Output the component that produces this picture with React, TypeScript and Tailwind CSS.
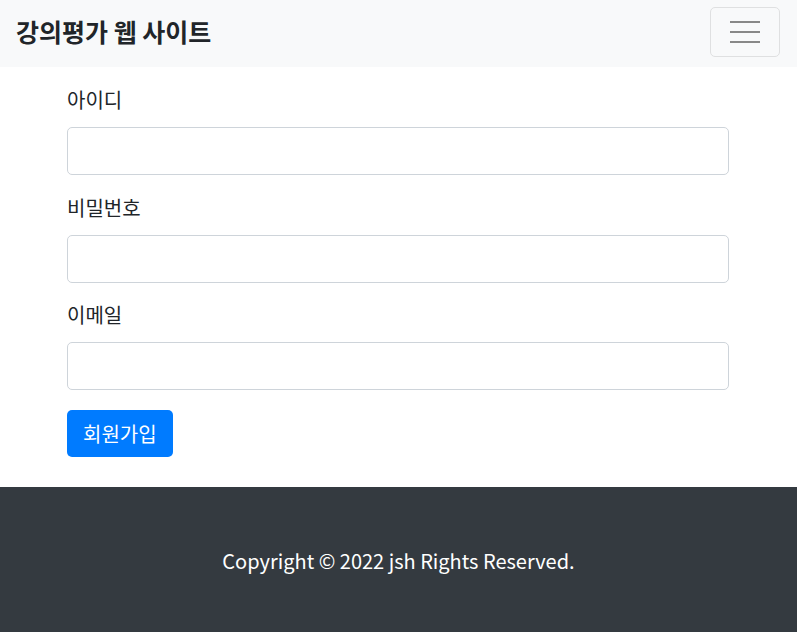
export default function App() {
  const fields = [
    { id: 'userID', label: '아이디', type: 'text' },
    { id: 'userPassword', label: '비밀번호', type: 'password' },
    { id: 'userEmail', label: '이메일', type: 'email' },
  ];

  return (
    <div className="min-h-[632px] flex flex-col bg-white text-[#212529] font-['Noto_Sans_CJK_KR',sans-serif]">
      {/* Navbar */}
      <nav className="h-[67px] bg-[#f8f9fa] flex items-center justify-between pl-4 pr-[17px]">
        <a href="#" className="text-[25px] font-bold text-[#212529] leading-none -mt-[5px]">강의평가 웹 사이트</a>
        <button className="w-[70px] h-[50px] border border-[#dfe0e1] rounded-[5px] flex flex-col items-center justify-center gap-[8px] -mt-[4px]">
          <span className="block w-[30px] h-[2px] bg-[#888]" />
          <span className="block w-[30px] h-[2px] bg-[#888]" />
          <span className="block w-[30px] h-[2px] bg-[#888]" />
        </button>
      </nav>

      {/* Form */}
      <section className="ml-[67px] mr-[68px] pt-[18px] pb-[30px]">
        <form className="flex flex-col">
          {fields.map((f) => (
            <div key={f.id} className="mb-[17.5px]">
              <label htmlFor={f.id} className="block text-[20px] leading-[30px] mb-[12px]">{f.label}</label>
              <input id={f.id} type={f.type} className="block w-full h-[48px] border border-[#ced4da] rounded-[5px] px-4 text-[20px] outline-none" />
            </div>
          ))}
          <button type="submit" className="self-start mt-[2.5px] h-[47px] px-4 bg-[#007bff] text-white text-[20px] rounded-[5px]">회원가입</button>
        </form>
      </section>

      {/* Footer */}
      <footer className="flex-1 bg-[#343a40] text-white flex items-center justify-center pt-[3px]">
        <p className="text-[20px]">Copyright © 2022 jsh Rights Reserved.</p>
      </footer>
    </div>
  );
}
